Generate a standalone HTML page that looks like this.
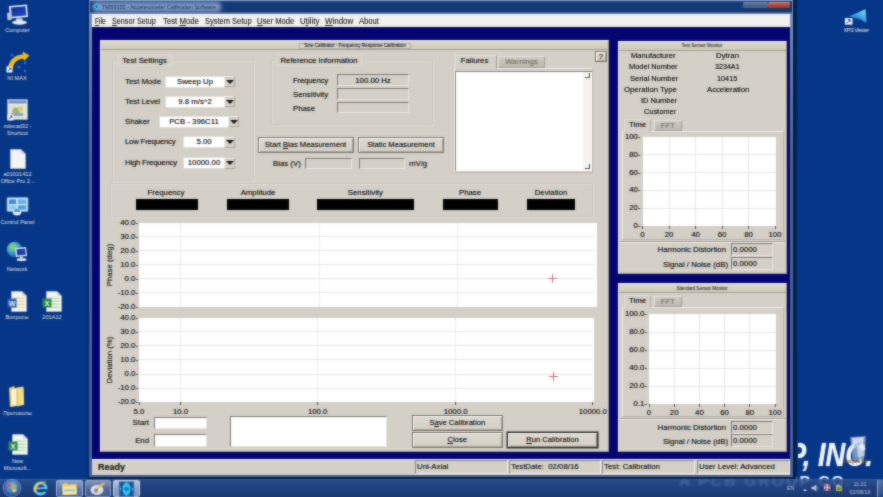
<!DOCTYPE html>
<html>
<head>
<meta charset="utf-8">
<title>TMS9155</title>
<style>
html,body{margin:0;padding:0;}
.layer{position:absolute;left:-10px;top:-10px;width:903px;height:517px;overflow:hidden;background:#063687;text-shadow:0 0 0.6px rgba(0,0,0,0.5);}
.inner{position:absolute;left:10px;top:10px;width:883px;height:497px;}
body{width:883px;height:497px;overflow:hidden;position:relative;background:#063687;font-family:"Liberation Sans",sans-serif;font-size:7.8px;color:#161616;}
.a{position:absolute;}
.t{position:absolute;white-space:nowrap;line-height:10px;height:10px;color:#161616;font-size:7.8px;}
.r{text-align:right;}
.c{text-align:center;}
.g{color:#8a867e;}
.beige{background:#d4d0c8;}
.sunk{position:absolute;box-sizing:border-box;border-top:1px solid #807c73;border-left:1px solid #807c73;border-right:1px solid #e9e6e0;border-bottom:1px solid #e9e6e0;background:#d4d0c8;}
.btn{position:absolute;box-sizing:border-box;border:1px solid #7d796f;box-shadow:inset 1px 1px 0 #f6f5f1, inset -1px -1px 0 #a9a59b;background:linear-gradient(#dedad3,#d2cec5);text-align:center;font-size:7.6px;line-height:13.5px;color:#161616;white-space:nowrap;}
.grp{position:absolute;box-sizing:border-box;border:1px solid #cbc7be;box-shadow:inset 1px 1px 0 #dedbd4, 1px 1px 0 #dedbd4;}
.gl{position:absolute;background:#d4d0c8;border:1px solid #dcd9d2;box-sizing:border-box;text-align:center;line-height:9px;height:11px;font-size:7.8px;color:#161616;white-space:nowrap;}
.dd{position:absolute;box-sizing:border-box;background:#fff;text-align:center;line-height:10px;font-size:7.8px;color:#161616;white-space:nowrap;box-shadow:0 0 0 1px #e2dfd8;}
.ddb{position:absolute;box-sizing:border-box;width:11px;height:11px;background:#d6d2ca;border:1px solid #aca89e;border-top-color:#efede8;border-left-color:#efede8;}
.ddb:after{content:"";position:absolute;left:0.5px;top:2.5px;border-left:4px solid transparent;border-right:4px solid transparent;border-top:4px solid #141414;}
.blk{position:absolute;background:#000;}
.lbl{position:absolute;color:#e8eefa;font-size:5.6px;line-height:6.5px;text-align:center;white-space:nowrap;width:44px;}
.h{position:absolute;height:1px;background:#e8e8e8;}
.v{position:absolute;width:1px;background:#e8e8e8;}
.pane{position:absolute;box-sizing:border-box;top:460px;height:14px;border:1px solid #8d897f;border-right-color:#f4f2ee;border-bottom-color:#f4f2ee;font-size:7.8px;line-height:12px;padding-left:1px;white-space:nowrap;color:#161616;}
.tab{position:absolute;box-sizing:border-box;font-size:7.8px;text-align:center;white-space:nowrap;}
</style>
</head>
<body>

<div class="layer"><div class="inner">
<div class="a" id="inc" style="left:787.5px;top:437px;font:italic bold 33px 'Liberation Sans',sans-serif;color:#f2f5fb;white-space:nowrap;line-height:36px;transform-origin:0 0;transform:scaleX(0.83);text-shadow:0 0 1px #f2f5fb;">P, INC.</div>
<div class="a" id="pcb" style="left:679px;top:472.5px;font:bold 15.5px 'Liberation Sans',sans-serif;color:#e8eefa;letter-spacing:2.2px;white-space:nowrap;line-height:16px;text-shadow:none;clip-path:inset(0 0 0 115px);">A PCB GROUP CO.</div>
<div class="a" style="left:86px;top:-6px;width:3px;height:483px;background:linear-gradient(90deg,#063687,#04286a);"></div>
<div class="a" style="left:88.5px;top:-6px;width:704.5px;height:483px;background:linear-gradient(#7d96be,#6a84b2 12%,#4a6496 35%,#48629a);"></div>
<div class="a" style="left:793px;top:-6px;width:5px;height:483px;background:linear-gradient(90deg,#041c40,#04204c 50%,#063687);"></div>
<div class="a" style="left:90px;top:-6px;width:702px;height:19.7px;background:linear-gradient(#7a94c4 0,#7a94c4 6.8px,#1c3c74 7.6px,#123c7c 9.5px,#103a78 15.5px,#1a3668 17.5px,#6f7f9c 19.5px);"></div>
<div class="a" style="left:93px;top:1.5px;width:128px;height:10.5px;background:#9db4d8;opacity:0.8;filter:blur(2.2px);border-radius:4px;"></div>
<div class="t" style="left:102.0px;top:1.6px;font-size:6px;transform-origin:0 50%;transform:scaleX(0.909);color:#14284e;text-shadow:none;">TMS9155 - Accelerometer Calibration Software</div>
<svg class="a" style="left:92.5px;top:3px" width="7" height="7" viewBox="0 0 7 7"><polygon points="3.5,0 7,3.5 3.5,7 0,3.5" fill="#35c3e8"/><polygon points="3.5,1.8 5.2,3.5 3.5,5.2 1.8,3.5" fill="#1a6fc0"/></svg>
<div class="a" style="left:768px;top:2px;width:22px;height:5.5px;background:linear-gradient(#d88a80,#b8453c 45%,#a8382f);border-radius:1.5px;"></div>
<div class="a" style="left:743px;top:2px;width:24.5px;height:5.5px;background:linear-gradient(#7388ac,#4f6790 45%,#486089);border-radius:1.5px;"></div>
<div class="a" style="left:88px;top:477px;width:708px;height:2px;background:#04204c;"></div>
<div class="a" style="left:92px;top:26px;width:698px;height:433.5px;background:#050571;"></div>
<div class="a" style="left:92px;top:13.6px;width:698px;height:13.9px;background:linear-gradient(#eaeef6,#f1f1f1 30%,#f3f1ec 80%,#ecebf4);"></div>
<div class="t" style="left:95.0px;top:15.6px;font-size:9.2px;transform-origin:0 50%;transform:scaleX(0.729);color:#2e2e2e;"><u>F</u>ile</div>
<div class="t" style="left:112.2px;top:15.6px;font-size:9.2px;transform-origin:0 50%;transform:scaleX(0.786);color:#2e2e2e;"><u>S</u>ensor Setup</div>
<div class="t" style="left:162.9px;top:15.6px;font-size:9.2px;transform-origin:0 50%;transform:scaleX(0.846);color:#2e2e2e;">Test <u>M</u>ode</div>
<div class="t" style="left:204.6px;top:15.6px;font-size:9.2px;transform-origin:0 50%;transform:scaleX(0.814);color:#2e2e2e;">S<u>y</u>stem Setup</div>
<div class="t" style="left:256.7px;top:15.6px;font-size:9.2px;transform-origin:0 50%;transform:scaleX(0.829);color:#2e2e2e;"><u>U</u>ser Mode</div>
<div class="t" style="left:299.8px;top:15.6px;font-size:9.2px;transform-origin:0 50%;transform:scaleX(0.867);color:#2e2e2e;">U<u>t</u>ility</div>
<div class="t" style="left:324.7px;top:15.6px;font-size:9.2px;transform-origin:0 50%;transform:scaleX(0.865);color:#2e2e2e;"><u>W</u>indow</div>
<div class="t" style="left:359.0px;top:15.6px;font-size:9.2px;transform-origin:0 50%;transform:scaleX(0.832);color:#2e2e2e;">About</div>
<div class="a beige" style="left:92px;top:459px;width:698px;height:16px;border-top:1px solid #f4f2ee;box-sizing:border-box;"></div>
<div class="t" style="left:98px;top:462px;font-size:9px;font-weight:bold;color:#1a1a1a;">Ready</div>
<div class="pane" style="left:415px;width:93px;">Uni-Axial</div>
<div class="pane" style="left:509px;width:92px;">TestDate:&nbsp; 02/08/16</div>
<div class="pane" style="left:602px;width:93px;">Test: Calibration</div>
<div class="pane" style="left:697px;width:93px;">User Level: Advanced</div>
<div class="a beige" style="left:100px;top:40px;width:509.3px;height:412px;box-sizing:border-box;border-left:1px solid #f1efea;border-top:1px solid #f1efea;border-right:1px solid #9a968c;border-bottom:1px solid #9a968c;"></div>
<div class="a" style="left:101px;top:41px;width:507.3px;height:8px;background:linear-gradient(#dedac9,#cfcab9);border-bottom:1px solid #a5a197;"></div>
<div class="a" style="left:299px;top:42.5px;width:112px;height:6px;background:#d8d4cc;border:0.5px solid #b0aca2;box-sizing:border-box;"></div>
<div class="t c" style="left:299px;top:42.5px;width:112px;font-size:4.6px;line-height:6px;height:6px;color:#222;">Sine Calibrator - Frequency Response Calibration</div>
<div class="grp" style="left:112px;top:60px;width:142px;height:121px;"></div>
<div class="gl" style="left:118px;top:55px;width:55px;text-indent:-2px;">Test Settings</div>
<div class="t" style="left:125px;top:76.7px">Test Mode</div>
<div class="dd" style="left:166px;top:76.7px;width:58px;height:10px;">Sweep Up</div>
<div class="ddb" style="left:224px;top:76.2px;"></div>
<div class="t" style="left:125px;top:96.7px">Test Level</div>
<div class="dd" style="left:166px;top:96.7px;width:58px;height:10px;">9.8 m/s^2</div>
<div class="ddb" style="left:224px;top:96.2px;"></div>
<div class="t" style="left:125px;top:116.6px">Shaker</div>
<div class="dd" style="left:160px;top:116.6px;width:68px;height:10px;">PCB - 396C11</div>
<div class="ddb" style="left:228px;top:116.1px;"></div>
<div class="t" style="left:125px;top:137.0px;letter-spacing:-0.22px">Low Frequency</div>
<div class="dd" style="left:184px;top:137.0px;width:40px;height:10px;">5.00</div>
<div class="ddb" style="left:224px;top:136.5px;"></div>
<div class="t" style="left:125px;top:158.0px;letter-spacing:-0.22px">High Frequency</div>
<div class="dd" style="left:184px;top:158.0px;width:40px;height:10px;">10000.00</div>
<div class="ddb" style="left:224px;top:157.5px;"></div>
<div class="grp" style="left:271px;top:60px;width:162px;height:65px;"></div>
<div class="gl" style="left:276px;top:55px;width:86px;">Reference Information</div>
<div class="t" style="left:293px;top:75.8px;letter-spacing:-0.22px">Frequency</div>
<div class="sunk c" style="left:337px;top:73.6px;width:72px;height:12.4px;font-size:7.8px;line-height:12.0px;color:#161616;">100.00 Hz</div>
<div class="t" style="left:293px;top:90.3px">Sensitivity</div>
<div class="sunk c" style="left:337px;top:87.8px;width:72px;height:12.0px;font-size:7.8px;line-height:11.6px;color:#161616;"></div>
<div class="t" style="left:293px;top:104.0px">Phase</div>
<div class="sunk c" style="left:337px;top:101.7px;width:72px;height:11.8px;font-size:7.8px;line-height:11.4px;color:#161616;"></div>
<div class="btn" style="left:257.5px;top:137px;width:96px;height:15.5px;">Start <u>B</u>ias Measurement</div>
<div class="btn" style="left:358px;top:137px;width:86px;height:15.5px;">Static Measurement</div>
<div class="t" style="left:273px;top:158.6px;">Bias (V)</div>
<div class="sunk" style="left:305px;top:158px;width:47px;height:11px;"></div>
<div class="sunk" style="left:358.5px;top:158px;width:46px;height:11px;"></div>
<div class="t" style="left:409px;top:158.6px;">mV/g</div>
<div class="a" style="left:454px;top:68px;width:139px;height:105px;box-sizing:border-box;border:1px solid #b9b5ab;border-top-color:#efede8;border-left-color:#efede8;background:#d4d0c8;"></div>
<div class="tab" style="left:455px;top:54.5px;width:42px;height:14px;line-height:10.5px;background:#d4d0c8;border:1px solid #e6e3dc;border-right-color:#a9a59b;border-bottom:none;color:#161616;text-indent:-3px;">Failures</div>
<div class="tab" style="left:498px;top:56px;width:47px;height:11.5px;line-height:9px;background:linear-gradient(#d0ccc3,#bdb9af);border:1px solid #a5a197;border-top-color:#e4e1da;border-left-color:#e4e1da;color:#8a867e;">Warnings</div>
<div class="a" style="left:455px;top:70.6px;width:137px;height:100.5px;background:#fff;box-sizing:border-box;border-top:1px solid #8d897f;border-left:1px solid #8d897f;"></div>
<div class="a" style="left:583px;top:72px;width:8px;height:98px;background:#f4f3f0;"></div>
<div class="a" style="left:585px;top:73px;width:5px;height:5px;border-right:1px solid #55524c;border-bottom:1px solid #55524c;box-sizing:border-box;"></div>
<div class="a" style="left:585px;top:164px;width:5px;height:5px;border-right:1px solid #55524c;border-bottom:1px solid #55524c;box-sizing:border-box;"></div>
<div class="btn" style="left:595px;top:50.5px;width:12px;height:11.5px;line-height:9.5px;font-weight:bold;color:#8b5a3c;font-size:8px;">?</div>
<div class="grp" style="left:110px;top:183px;width:483px;height:34px;"></div>
<div class="t c" style="left:126.0px;width:80px;top:187.5px;">Frequency</div>
<div class="blk" style="left:135.6px;top:199.3px;width:62.1px;height:11px;"></div>
<div class="t c" style="left:218.0px;width:80px;top:187.5px;">Amplitude</div>
<div class="blk" style="left:226.7px;top:199.3px;width:62.1px;height:11px;"></div>
<div class="t c" style="left:325.4px;width:80px;top:187.5px;">Sensitivity</div>
<div class="blk" style="left:317.3px;top:199.3px;width:96.7px;height:11px;"></div>
<div class="t c" style="left:430.0px;width:80px;top:187.5px;">Phase</div>
<div class="blk" style="left:443.0px;top:199.3px;width:55.0px;height:11px;"></div>
<div class="t c" style="left:511.0px;width:80px;top:187.5px;">Deviation</div>
<div class="blk" style="left:526.7px;top:199.3px;width:47.9px;height:11px;"></div>
<div class="a" style="left:139px;top:222.5px;width:458px;height:84.0px;background:#fff;"></div>
<div class="t r" style="left:100px;width:38px;top:217.5px;">40.0-</div>
<div class="h" style="left:139px;top:236.0px;width:456px;"></div>
<div class="t r" style="left:100px;width:38px;top:231.5px;">30.0-</div>
<div class="h" style="left:139px;top:250.0px;width:456px;"></div>
<div class="t r" style="left:100px;width:38px;top:245.5px;">20.0-</div>
<div class="h" style="left:139px;top:264.0px;width:456px;"></div>
<div class="t r" style="left:100px;width:38px;top:259.5px;">10.0-</div>
<div class="h" style="left:139px;top:278.0px;width:456px;"></div>
<div class="t r" style="left:100px;width:38px;top:273.5px;">0.0-</div>
<div class="h" style="left:139px;top:292.0px;width:456px;"></div>
<div class="t r" style="left:100px;width:38px;top:287.5px;">-10.0-</div>
<div class="t r" style="left:100px;width:38px;top:301.5px;">-20.0-</div>
<div class="v" style="left:180.2px;top:222.5px;height:84.0px;background:#ececec;"></div>
<div class="v" style="left:318.6px;top:222.5px;height:84.0px;background:#ececec;"></div>
<div class="v" style="left:457.0px;top:222.5px;height:84.0px;background:#ececec;"></div>
<div class="t c" style="left:70px;width:80px;top:259.5px;transform:rotate(-90deg);">Phase (deg)</div>
<div class="a" style="left:139px;top:317.5px;width:454.6px;height:84.80000000000001px;background:#fff;"></div>
<div class="t r" style="left:100px;width:38px;top:312.5px;">40.0-</div>
<div class="h" style="left:139px;top:331.1px;width:452.6px;"></div>
<div class="t r" style="left:100px;width:38px;top:326.6px;">30.0-</div>
<div class="h" style="left:139px;top:345.3px;width:452.6px;"></div>
<div class="t r" style="left:100px;width:38px;top:340.8px;">20.0-</div>
<div class="h" style="left:139px;top:359.4px;width:452.6px;"></div>
<div class="t r" style="left:100px;width:38px;top:354.9px;">10.0-</div>
<div class="h" style="left:139px;top:373.5px;width:452.6px;"></div>
<div class="t r" style="left:100px;width:38px;top:369.0px;">0.0-</div>
<div class="h" style="left:139px;top:387.7px;width:452.6px;"></div>
<div class="t r" style="left:100px;width:38px;top:383.2px;">-10.0-</div>
<div class="t r" style="left:100px;width:38px;top:397.3px;">-20.0-</div>
<div class="v" style="left:179.9px;top:317.5px;height:84.80000000000001px;background:#ececec;"></div>
<div class="v" style="left:317.3px;top:317.5px;height:84.80000000000001px;background:#ececec;"></div>
<div class="v" style="left:454.7px;top:317.5px;height:84.80000000000001px;background:#ececec;"></div>
<div class="t c" style="left:70px;width:80px;top:354.9px;transform:rotate(-90deg);">Deviation (%)</div>
<div class="a" style="left:548.1px;top:277.7px;width:9px;height:1px;background:#c4707f;"></div>
<div class="a" style="left:552.1px;top:273.7px;width:1px;height:9px;background:#c4707f;"></div>
<div class="a" style="left:549.1px;top:375.7px;width:9px;height:1px;background:#c4707f;"></div>
<div class="a" style="left:553.1px;top:371.7px;width:1px;height:9px;background:#c4707f;"></div>
<div class="t c" style="left:108.8px;width:60px;top:406.8px;">5.0</div>
<div class="t c" style="left:150.5px;width:60px;top:406.8px;">10.0</div>
<div class="t c" style="left:287.7px;width:60px;top:406.8px;">100.0</div>
<div class="t c" style="left:425.6px;width:60px;top:406.8px;">1000.0</div>
<div class="t c" style="left:562.8px;width:60px;top:406.8px;">10000.0</div>
<div class="a" style="left:138.5px;top:402px;width:1px;height:3px;background:#55524c;"></div>
<div class="a" style="left:180.0px;top:402px;width:1px;height:3px;background:#55524c;"></div>
<div class="a" style="left:317.2px;top:402px;width:1px;height:3px;background:#55524c;"></div>
<div class="a" style="left:454.8px;top:402px;width:1px;height:3px;background:#55524c;"></div>
<div class="a" style="left:592.0px;top:402px;width:1px;height:3px;background:#55524c;"></div>
<div class="t r" style="left:109px;width:40px;top:418px;">Start</div>
<div class="t r" style="left:109px;width:40px;top:435.5px;">End</div>
<div class="sunk" style="left:154px;top:416.5px;width:53px;height:12.5px;background:#fff;"></div>
<div class="sunk" style="left:154px;top:434px;width:53px;height:12.5px;background:#fff;"></div>
<div class="sunk" style="left:230px;top:416.4px;width:156.5px;height:31px;background:#fff;"></div>
<div class="btn" style="left:412px;top:414.5px;width:90.5px;height:16px;line-height:14px;">S<u>a</u>ve Calibration</div>
<div class="btn" style="left:412px;top:432px;width:90.5px;height:16px;line-height:14px;"><u>C</u>lose</div>
<div class="btn" style="left:507px;top:432px;width:91px;height:16px;line-height:14px;border-color:#2e2c28;box-shadow:inset 1px 1px 0 #f6f5f1, inset -1px -1px 0 #8d897f, 0 0 0 0.5px #2e2c28;"><u>R</u>un Calibration</div>
<div class="a beige" style="left:617.5px;top:40.5px;width:169px;height:233.0px;box-sizing:border-box;border-left:1px solid #f1efea;border-top:1px solid #f1efea;border-right:1px solid #9a968c;border-bottom:1px solid #9a968c;"></div>
<div class="a" style="left:618.5px;top:41.5px;width:167px;height:8px;background:linear-gradient(#dedac9,#cfcab9);border-bottom:1px solid #a5a197;"></div>
<div class="t c" style="left:642px;top:43.0px;width:120px;font-size:4.6px;line-height:6px;height:6px;color:#444;">Test Sensor Monitor</div>
<div class="a beige" style="left:617.5px;top:283px;width:169px;height:169px;box-sizing:border-box;border-left:1px solid #f1efea;border-top:1px solid #f1efea;border-right:1px solid #9a968c;border-bottom:1px solid #9a968c;"></div>
<div class="a" style="left:618.5px;top:284px;width:167px;height:8px;background:linear-gradient(#dedac9,#cfcab9);border-bottom:1px solid #a5a197;"></div>
<div class="t c" style="left:642px;top:285.5px;width:120px;font-size:4.6px;line-height:6px;height:6px;color:#444;">Standard Sensor Monitor</div>
<div class="t" style="left:630.8px;top:51.3px;font-size:7.8px;transform-origin:0 50%;transform:scaleX(0.970);">Manufacturer</div>
<div class="t" style="left:716.0px;top:51.3px;font-size:7.8px;transform-origin:0 50%;transform:scaleX(1.001);">Dytran</div>
<div class="t" style="left:628.7px;top:62.4px;font-size:7.8px;transform-origin:0 50%;transform:scaleX(0.950);">Model Number</div>
<div class="t" style="left:715.0px;top:62.4px;font-size:7.8px;transform-origin:0 50%;transform:scaleX(0.915);">3234A1</div>
<div class="t" style="left:630.4px;top:73.9px;font-size:7.8px;transform-origin:0 50%;transform:scaleX(0.965);">Serial Number</div>
<div class="t" style="left:717.2px;top:73.9px;font-size:7.8px;transform-origin:0 50%;transform:scaleX(0.936);">10415</div>
<div class="t" style="left:623.5px;top:85.0px;font-size:7.8px;transform-origin:0 50%;transform:scaleX(0.994);">Operation Type</div>
<div class="t" style="left:706.6px;top:85.0px;font-size:7.8px;transform-origin:0 50%;transform:scaleX(0.988);">Acceleration</div>
<div class="t" style="left:641.3px;top:95.9px;font-size:7.8px;transform-origin:0 50%;transform:scaleX(0.955);">ID Number</div>
<div class="t" style="left:643.8px;top:107.4px;font-size:7.8px;transform-origin:0 50%;transform:scaleX(0.946);">Customer</div>
<div class="a" style="left:622px;top:131.0px;width:162px;height:108.5px;box-sizing:border-box;border:1px solid #b9b5ab;border-top-color:#efede8;border-left-color:#efede8;"></div>
<div class="tab" style="left:624px;top:118.5px;width:27px;height:13.5px;line-height:10.5px;background:#d4d0c8;border:1px solid #dfdcd5;border-right-color:#b5b1a7;border-bottom:none;color:#161616;">Time</div>
<div class="tab" style="left:654px;top:119.5px;width:28px;height:11.5px;line-height:9.5px;background:linear-gradient(#d0ccc3,#bdb9af);border:1px solid #a5a197;border-top-color:#e4e1da;border-left-color:#e4e1da;color:#8a867e;">FFT</div>
<div class="a" style="left:642.5px;top:137px;width:133.5px;height:89px;background:#fff;"></div>
<div class="t r" style="left:600.5px;width:40px;top:132.0px;">100-</div>
<div class="h" style="left:642.5px;top:154.3px;width:133.5px;"></div>
<div class="t r" style="left:600.5px;width:40px;top:149.8px;">80-</div>
<div class="h" style="left:642.5px;top:172.1px;width:133.5px;"></div>
<div class="t r" style="left:600.5px;width:40px;top:167.6px;">60-</div>
<div class="h" style="left:642.5px;top:189.9px;width:133.5px;"></div>
<div class="t r" style="left:600.5px;width:40px;top:185.4px;">40-</div>
<div class="h" style="left:642.5px;top:207.7px;width:133.5px;"></div>
<div class="t r" style="left:600.5px;width:40px;top:203.2px;">20-</div>
<div class="t r" style="left:600.5px;width:40px;top:221.0px;">0-</div>
<div class="t c" style="left:622.5px;width:40px;top:230.0px;">0</div>
<div class="a" style="left:642.0px;top:226px;width:1px;height:2.5px;background:#55524c;"></div>
<div class="v" style="left:668.5px;top:137px;height:89px;"></div>
<div class="t c" style="left:649.0px;width:40px;top:230.0px;">20</div>
<div class="a" style="left:668.5px;top:226px;width:1px;height:2.5px;background:#55524c;"></div>
<div class="v" style="left:695.0px;top:137px;height:89px;"></div>
<div class="t c" style="left:675.5px;width:40px;top:230.0px;">40</div>
<div class="a" style="left:695.0px;top:226px;width:1px;height:2.5px;background:#55524c;"></div>
<div class="v" style="left:721.5px;top:137px;height:89px;"></div>
<div class="t c" style="left:702.0px;width:40px;top:230.0px;">60</div>
<div class="a" style="left:721.5px;top:226px;width:1px;height:2.5px;background:#55524c;"></div>
<div class="v" style="left:748.0px;top:137px;height:89px;"></div>
<div class="t c" style="left:728.5px;width:40px;top:230.0px;">80</div>
<div class="a" style="left:748.0px;top:226px;width:1px;height:2.5px;background:#55524c;"></div>
<div class="t c" style="left:755.0px;width:40px;top:230.0px;">100</div>
<div class="a" style="left:774.5px;top:226px;width:1px;height:2.5px;background:#55524c;"></div>
<div class="a" style="left:620px;top:241px;width:165px;height:1px;background:#a5a197;border-bottom:1px solid #efede8;"></div>
<div class="t r" style="left:626px;width:100px;top:245.3px;">Harmonic Distortion</div>
<div class="sunk" style="left:731px;top:242.8px;width:42px;height:13px;font-size:7.8px;line-height:11px;padding-left:1px;color:#161616;">0.0000</div>
<div class="t r" style="left:628px;width:100px;top:259.6px;">Signal / Noise (dB)</div>
<div class="sunk" style="left:731px;top:257.1px;width:42px;height:13px;font-size:7.8px;line-height:11px;padding-left:1px;color:#161616;">0.0000</div>
<div class="a" style="left:622px;top:307.0px;width:162px;height:109.5px;box-sizing:border-box;border:1px solid #b9b5ab;border-top-color:#efede8;border-left-color:#efede8;"></div>
<div class="tab" style="left:624px;top:294.5px;width:27px;height:13.5px;line-height:10.5px;background:#d4d0c8;border:1px solid #dfdcd5;border-right-color:#b5b1a7;border-bottom:none;color:#161616;">Time</div>
<div class="tab" style="left:654px;top:295.5px;width:28px;height:11.5px;line-height:9.5px;background:linear-gradient(#d0ccc3,#bdb9af);border:1px solid #a5a197;border-top-color:#e4e1da;border-left-color:#e4e1da;color:#8a867e;">FFT</div>
<div class="a" style="left:649px;top:314px;width:127px;height:90px;background:#fff;"></div>
<div class="t r" style="left:607px;width:40px;top:309.0px;">100.0-</div>
<div class="h" style="left:649px;top:331.5px;width:127px;"></div>
<div class="t r" style="left:607px;width:40px;top:327.0px;">80.0-</div>
<div class="h" style="left:649px;top:349.5px;width:127px;"></div>
<div class="t r" style="left:607px;width:40px;top:345.0px;">60.0-</div>
<div class="h" style="left:649px;top:367.5px;width:127px;"></div>
<div class="t r" style="left:607px;width:40px;top:363.0px;">40.0-</div>
<div class="h" style="left:649px;top:385.5px;width:127px;"></div>
<div class="t r" style="left:607px;width:40px;top:381.0px;">20.0-</div>
<div class="t r" style="left:607px;width:40px;top:399.0px;">0.1-</div>
<div class="t c" style="left:629.0px;width:40px;top:408.0px;">0</div>
<div class="a" style="left:648.5px;top:404px;width:1px;height:2.5px;background:#55524c;"></div>
<div class="v" style="left:673.7px;top:314px;height:90px;"></div>
<div class="t c" style="left:654.2px;width:40px;top:408.0px;">20</div>
<div class="a" style="left:673.7px;top:404px;width:1px;height:2.5px;background:#55524c;"></div>
<div class="v" style="left:698.9px;top:314px;height:90px;"></div>
<div class="t c" style="left:679.4px;width:40px;top:408.0px;">40</div>
<div class="a" style="left:698.9px;top:404px;width:1px;height:2.5px;background:#55524c;"></div>
<div class="v" style="left:724.1px;top:314px;height:90px;"></div>
<div class="t c" style="left:704.6px;width:40px;top:408.0px;">60</div>
<div class="a" style="left:724.1px;top:404px;width:1px;height:2.5px;background:#55524c;"></div>
<div class="v" style="left:749.3px;top:314px;height:90px;"></div>
<div class="t c" style="left:729.8px;width:40px;top:408.0px;">80</div>
<div class="a" style="left:749.3px;top:404px;width:1px;height:2.5px;background:#55524c;"></div>
<div class="t c" style="left:755.0px;width:40px;top:408.0px;">100</div>
<div class="a" style="left:774.5px;top:404px;width:1px;height:2.5px;background:#55524c;"></div>
<div class="a" style="left:620px;top:418px;width:165px;height:1px;background:#a5a197;border-bottom:1px solid #efede8;"></div>
<div class="t r" style="left:626px;width:100px;top:423.0px;">Harmonic Distortion</div>
<div class="sunk" style="left:731px;top:420.5px;width:42px;height:13px;font-size:7.8px;line-height:11px;padding-left:1px;color:#161616;">0.0000</div>
<div class="t r" style="left:628px;width:100px;top:436.6px;">Signal / Noise (dB)</div>
<div class="sunk" style="left:731px;top:434.1px;width:42px;height:13px;font-size:7.8px;line-height:11px;padding-left:1px;color:#161616;">0.0000</div>
<svg class="a" style="left:6px;top:4px" width="24" height="22" viewBox="0 0 24 22">
<defs><linearGradient id="scr" x1="0" y1="0" x2="1" y2="1"><stop offset="0" stop-color="#0f2a96"/><stop offset="1" stop-color="#1f4fc4"/></linearGradient></defs>
<polygon points="3,2 21,0.5 22,13 4,14.5" fill="#dfe6f3"/>
<polygon points="5,3.5 19.5,2.3 20.3,11.6 5.8,12.8" fill="url(#scr)"/>
<polygon points="10,14.5 16,14 17,17 10,17.5" fill="#c2cad9"/>
<ellipse cx="13.5" cy="18.5" rx="7.5" ry="2.2" fill="#e6ebf5"/>
<polygon points="1,9 5,8.6 5.5,16 1.5,16.3" fill="#b9c3d6"/>
</svg>
<div class="lbl" style="left:-4.5px;top:26.8px;width:44px;">Computer</div>
<svg class="a" style="left:6px;top:51px" width="24" height="24" viewBox="0 0 24 24">
<circle cx="6" cy="4" r="1.5" fill="#2d67c9"/><circle cx="13" cy="16" r="1.6" fill="#2d67c9"/><circle cx="19" cy="12" r="1.4" fill="#2d67c9"/><circle cx="19" cy="20" r="1.4" fill="#2d67c9"/>
<path d="M1.5,18.5 C2.5,9 9,3.5 17,3.5 L16.5,0.5 L23.5,4.5 L18,10 L17.5,7.8 C11.5,8 7.5,11.5 6.5,18.5 Z" fill="#f0bb1c"/>
<rect x="0.5" y="15.5" width="6" height="6" fill="#f4f6fb"/><path d="M2,20 L5,17 M5,17 L3,17 M5,17 L5,19" stroke="#1b3fae" stroke-width="0.9" fill="none"/>
</svg>
<div class="lbl" style="left:-5.0px;top:74.8px;width:44px;">NI MAX</div>
<svg class="a" style="left:7px;top:99px" width="21" height="22" viewBox="0 0 21 22">
<rect x="0.5" y="0.5" width="20" height="20" fill="#e9ebe6" stroke="#9aa6b8" stroke-width="0.8"/>
<rect x="1.5" y="1.5" width="18" height="3" fill="#6f8fc6"/>
<rect x="2" y="6" width="17" height="13" fill="#dfe3cf"/>
<circle cx="9" cy="12" r="3.5" fill="#9db37a"/><circle cx="13.5" cy="10" r="2.5" fill="#e6c96a"/><rect x="4" y="14" width="12" height="3" fill="#8aa2c9"/>
<rect x="0.5" y="15.5" width="6" height="6" fill="#f4f6fb"/><path d="M2,20 L5,17 M5,17 L3,17 M5,17 L5,19" stroke="#1b3fae" stroke-width="0.9" fill="none"/>
</svg>
<div class="lbl" style="left:-4.5px;top:123.1px;width:44px;">ndecad32 -</div>
<div class="lbl" style="left:-4.5px;top:129.8px;width:44px;">Shortcut</div>
<svg class="a" style="left:10px;top:149px" width="16" height="20" viewBox="0 0 16 20">
<path d="M0.5,0.5 L11,0.5 L15.5,5 L15.5,19.5 L0.5,19.5 Z" fill="#f3f4f6" stroke="#c9ced8" stroke-width="0.6"/>
<path d="M11,0.5 L11,5 L15.5,5 Z" fill="#d2d7e1"/>
</svg>
<div class="lbl" style="left:-4.5px;top:170.8px;width:44px;">a01021412</div>
<div class="lbl" style="left:-4.5px;top:177.6px;width:44px;">Office Pro 2...</div>
<svg class="a" style="left:6px;top:197px" width="23" height="19" viewBox="0 0 23 19">
<rect x="1" y="0.5" width="21" height="14" rx="1" fill="#bfe0f2" stroke="#6da7d4" stroke-width="0.8"/>
<rect x="3" y="2.5" width="7" height="4.5" fill="#3f8fd0"/><rect x="12" y="2.5" width="8" height="4.5" fill="#69b5e4"/>
<rect x="3" y="8.5" width="7" height="4" fill="#8cc9ea"/><rect x="12" y="8.5" width="8" height="4" fill="#4f9ed6"/>
<ellipse cx="11" cy="15.5" rx="4.2" ry="3" fill="#e8edf4"/><path d="M8,15 A3,3 0 0 1 14,15" fill="#4a8fd2"/>
</svg>
<div class="lbl" style="left:-4.5px;top:218.8px;width:44px;">Control Panel</div>
<svg class="a" style="left:6px;top:241px" width="22" height="22" viewBox="0 0 22 22">
<defs><radialGradient id="gl" cx="0.4" cy="0.35" r="0.7"><stop offset="0" stop-color="#9be07a"/><stop offset="0.5" stop-color="#3fa0c8"/><stop offset="1" stop-color="#1a56b0"/></radialGradient></defs>
<circle cx="8.5" cy="8.5" r="7.8" fill="url(#gl)"/>
<path d="M3,6 C5,3 8,3 9,5 C8,8 5,9 3,6 Z" fill="#7fd06a" opacity="0.9"/>
<polygon points="9,7 20,6 21,15 10,16" fill="#dfe6f3"/><polygon points="10.5,8.3 19,7.5 19.7,13.8 11.2,14.6" fill="#1b3fae"/>
<ellipse cx="15.5" cy="18.5" rx="5" ry="1.6" fill="#e6ebf5"/><rect x="14" y="15.5" width="3" height="3" fill="#c2cad9"/>
</svg>
<div class="lbl" style="left:-5.0px;top:265.8px;width:44px;">Network</div>
<svg class="a" style="left:7px;top:291px" width="20" height="21" viewBox="0 0 20 21">
<path d="M4.5,0.5 L15,0.5 L19.5,5 L19.5,20.5 L4.5,20.5 Z" fill="#f4f5f4" stroke="#c5cbd6" stroke-width="0.6"/>
<path d="M15,0.5 L15,5 L19.5,5 Z" fill="#d2d7e1"/>
<rect x="7" y="6.5" width="10.5" height="1.6" fill="#e9d9a6"/><rect x="7" y="9.5" width="10.5" height="1.6" fill="#e9d9a6"/><rect x="7" y="12.5" width="10.5" height="1.6" fill="#e9d9a6"/><rect x="7" y="15.5" width="10.5" height="1.6" fill="#e9d9a6"/>
<rect x="0.5" y="7.5" width="9" height="9" fill="#2b5fb8"/>
<text x="5" y="14.6" font-family="Liberation Sans" font-weight="bold" font-size="7" fill="#fff" text-anchor="middle">W</text>
</svg>
<div class="lbl" style="left:-5.0px;top:314.3px;width:44px;">Вопросы</div>
<svg class="a" style="left:41.5px;top:291px" width="20" height="21" viewBox="0 0 20 21">
<path d="M4.5,0.5 L15,0.5 L19.5,5 L19.5,20.5 L4.5,20.5 Z" fill="#f4f5f4" stroke="#c5cbd6" stroke-width="0.6"/>
<path d="M15,0.5 L15,5 L19.5,5 Z" fill="#d2d7e1"/>
<rect x="7" y="6.5" width="10.5" height="1.6" fill="#bfe0b0"/><rect x="7" y="9.5" width="10.5" height="1.6" fill="#bfe0b0"/><rect x="7" y="12.5" width="10.5" height="1.6" fill="#bfe0b0"/><rect x="7" y="15.5" width="10.5" height="1.6" fill="#bfe0b0"/>
<rect x="0.5" y="7.5" width="9" height="9" fill="#2e8b4f"/>
<text x="5" y="14.6" font-family="Liberation Sans" font-weight="bold" font-size="7" fill="#fff" text-anchor="middle">X</text>
</svg>
<div class="lbl" style="left:30.0px;top:314.3px;width:44px;">201A12</div>
<svg class="a" style="left:8px;top:385px" width="17" height="23" viewBox="0 0 17 23">
<path d="M1,3 L6,1 L7,3 L15,2 L16,20 L2,22 Z" fill="#e9c95c"/>
<path d="M3,5 L8,3.5 L8.5,20 L3.5,21.5 Z" fill="#f7f2e4"/>
<path d="M8,3 L15.5,1.5 L16.2,19.5 L9,21.5 Z" fill="#f4dc85"/>
<path d="M9.5,5 L9.5,20" stroke="#d8b64a" stroke-width="0.8"/>
</svg>
<div class="lbl" style="left:-4.5px;top:410.1px;width:44px;">Протоколы</div>
<svg class="a" style="left:8px;top:434px" width="20" height="21" viewBox="0 0 20 21">
<path d="M4.5,0.5 L15,0.5 L19.5,5 L19.5,20.5 L4.5,20.5 Z" fill="#f4f5f4" stroke="#c5cbd6" stroke-width="0.6"/>
<path d="M15,0.5 L15,5 L19.5,5 Z" fill="#d2d7e1"/>
<rect x="7" y="6.5" width="10.5" height="1.6" fill="#bfe0b0"/><rect x="7" y="9.5" width="10.5" height="1.6" fill="#bfe0b0"/><rect x="7" y="12.5" width="10.5" height="1.6" fill="#bfe0b0"/><rect x="7" y="15.5" width="10.5" height="1.6" fill="#bfe0b0"/>
<rect x="0.5" y="7.5" width="9" height="9" fill="#2e8b4f"/>
<text x="5" y="14.6" font-family="Liberation Sans" font-weight="bold" font-size="7" fill="#fff" text-anchor="middle">X</text>
</svg>
<div class="lbl" style="left:-4.5px;top:457.5px;width:44px;">New</div>
<div class="lbl" style="left:-4.5px;top:464.6px;width:44px;">Microsoft...</div>
<svg class="a" style="left:844px;top:8px" width="24" height="18" viewBox="0 0 24 18">
<defs><linearGradient id="xps" x1="1" y1="0" x2="0.2" y2="1"><stop offset="0" stop-color="#9be4fb"/><stop offset="0.5" stop-color="#3fa8e8"/><stop offset="1" stop-color="#1f6fc8"/></linearGradient></defs>
<polygon points="21.4,1.3 5.3,8.2 11,10 22.6,14.5" fill="url(#xps)"/>
<path d="M11,10 Q15,8.5 19.5,13.3 L11.5,12.5 Z" fill="#164a9e" opacity="0.8"/>
<rect x="0.9" y="10.1" width="7.6" height="6.6" fill="#eef2fa"/><path d="M2.6,15.2 L6.2,11.8 M6.2,11.8 L4,11.8 M6.2,11.8 L6.2,14" stroke="#1b3fae" stroke-width="1" fill="none"/>
</svg>
<div class="lbl" style="left:834.0px;top:27.1px;width:44px;letter-spacing:-0.45px;">XPS Viewer</div>
<svg class="a" style="left:848px;top:434px" width="20" height="30" viewBox="0 0 20 30">
<path d="M2,3 L18,2 L16,27 L5,28 Z" fill="#c8d6e8" opacity="0.55"/>
<path d="M4,4 L16,3 L15,12 L5,13 Z" fill="#eef3fa" opacity="0.75"/>
<path d="M6,10 L13,8 L11,15 L14,21 L7,23 Z" fill="#7fa6d2" opacity="0.6"/>
<path d="M9,12 L17,10 L16.5,22 L10,24 Z" fill="#f4f7fb" opacity="0.6"/>
</svg>
<div class="lbl" style="left:834px;top:459px;width:44px;color:#8a6a3a;font-size:4.5px;">Recycle Bin</div>
<div class="a" style="left:-8px;top:478.5px;width:899px;height:26px;background:linear-gradient(#2a4d8a,#1f4280 6.5px,#193870 18.5px,#193870);border-top:1px solid #3a5a94;box-sizing:border-box;"></div>
<div class="a" style="left:679px;top:472.5px;font:bold 15.5px 'Liberation Sans',sans-serif;color:#6f8fc8;opacity:0.45;letter-spacing:2.2px;white-space:nowrap;line-height:16px;text-shadow:none;filter:blur(1px);clip-path:inset(6.5px 0 0 0);">A PCB GROUP CO.</div>
<div class="a" style="left:56px;top:479.5px;width:26.5px;height:17.5px;background:linear-gradient(#8fa6cb,#5c7bb0 50%,#4a6aa2);border:1px solid #9fb4d6;box-sizing:border-box;border-radius:1.5px;"></div>
<div class="a" style="left:85px;top:479.5px;width:26px;height:17.5px;background:linear-gradient(#8597b8,#55699a 50%,#445a8e);border:1px solid #8ea2c6;box-sizing:border-box;border-radius:1.5px;"></div>
<div class="a" style="left:113px;top:479.5px;width:27px;height:17.5px;background:linear-gradient(#b7c6de,#8ba3cb 50%,#7d97c2);border:1px solid #c5d2e8;box-sizing:border-box;border-radius:1.5px;"></div>
<svg class="a" style="left:2px;top:478px" width="20" height="19" viewBox="0 0 20 19">
<defs><radialGradient id="orb" cx="0.5" cy="0.4" r="0.6"><stop offset="0" stop-color="#a6c8ee"/><stop offset="0.6" stop-color="#3f74b8"/><stop offset="1" stop-color="#1f4480"/></radialGradient></defs>
<circle cx="10" cy="10" r="8.8" fill="url(#orb)" stroke="#8fb0dc" stroke-width="0.6"/>
<path d="M5.5,6.5 Q7.5,5.3 9.3,6.3 L9.3,9.6 Q7.5,8.8 5.5,9.8 Z" fill="#e8553a"/>
<path d="M10.3,6.4 Q12.3,7.4 14.3,6.4 L14.3,9.6 Q12.3,10.5 10.3,9.6 Z" fill="#8bc34a"/>
<path d="M5.5,10.8 Q7.5,9.8 9.3,10.6 L9.3,13.8 Q7.5,13 5.5,14 Z" fill="#3b8ee0"/>
<path d="M10.3,10.6 Q12.3,11.5 14.3,10.6 L14.3,13.7 Q12.3,14.7 10.3,13.8 Z" fill="#f5c63a"/>
</svg>
<svg class="a" style="left:32px;top:480px" width="17" height="16" viewBox="0 0 17 16">
<circle cx="8.5" cy="8.5" r="5.6" fill="none" stroke="#5cc0f2" stroke-width="3"/>
<rect x="4" y="7.3" width="10" height="2" fill="#5cc0f2"/>
<rect x="9" y="9.3" width="6.5" height="2.4" fill="#17346c"/>
<path d="M2,12 C0,6 8,-1 15.5,2.5 C10,1.5 4,6 3.5,12 Z" fill="#f2c84a"/>
</svg>
<svg class="a" style="left:61px;top:482px" width="17" height="14" viewBox="0 0 17 14">
<path d="M1,2 L6,1 L7,2.5 L15.5,2 L16,12.5 L1.5,13 Z" fill="#f0d36a"/>
<path d="M2,5 L15,4.4 L15.5,12 L2.3,12.5 Z" fill="#f8eaa4"/>
<rect x="3" y="7" width="11" height="2.5" fill="#8fc0e8" opacity="0.8"/>
</svg>
<svg class="a" style="left:89px;top:481px" width="18" height="15" viewBox="0 0 18 15">
<ellipse cx="8" cy="9" rx="6.5" ry="5" fill="#d9dde6"/>
<path d="M5,11 C7,6 11,3 15,1.5 L16,3 C12,5 9,8 7.5,12 Z" fill="#e9c45a"/>
<circle cx="7" cy="9.5" r="2" fill="#7f8aa3"/>
</svg>
<svg class="a" style="left:118px;top:480.5px" width="17" height="16" viewBox="0 0 17 16">
<rect x="1" y="0.5" width="15" height="15" fill="#2a63ae"/>
<polygon points="8.5,1 15.5,8 8.5,15 1.5,8" fill="#2ccaf0"/>
<polygon points="8.5,5.2 11.3,8 8.5,10.8 5.7,8" fill="#1479c8"/>
<rect x="3.3" y="1" width="1.2" height="14" fill="#143a78"/><rect x="12.5" y="1" width="1.2" height="14" fill="#143a78"/>
</svg>
<div class="t" style="left:787px;top:482.5px;font-size:5.2px;color:#b9c6de;text-shadow:none;">EN</div>
<div class="a" style="left:803px;top:488.5px;width:0;height:0;border-left:2px solid transparent;border-right:2px solid transparent;border-bottom:2.5px solid #dfe6f3;"></div>
<svg class="a" style="left:811px;top:483.5px;opacity:0.8" width="8" height="8" viewBox="0 0 9 9"><polygon points="0.5,3 3,3 6,0.5 6,8.5 3,6 0.5,6" fill="#e9eef6"/><path d="M7,2.5 Q8.5,4.5 7,6.5" stroke="#e9eef6" stroke-width="0.7" fill="none"/></svg>
<svg class="a" style="left:823px;top:483.5px;opacity:0.75" width="8" height="8" viewBox="0 0 9 9"><rect x="1" y="0.5" width="7" height="7" fill="#f3f0f0"/><path d="M1,0.5 L8,7.5 M8,0.5 L1,7.5" stroke="#d33" stroke-width="1.6"/><circle cx="4.5" cy="4" r="1.4" fill="#fff"/></svg>
<svg class="a" style="left:834.5px;top:483.5px;opacity:0.8" width="8" height="8" viewBox="0 0 9 9"><rect x="1" y="2" width="7" height="6" fill="#d8c84a"/><rect x="2" y="0.8" width="3" height="2" fill="#efe6a0"/><rect x="2.5" y="4" width="4" height="2.5" fill="#6f8a3a"/></svg>
<div class="t c" style="left:840px;width:40px;top:479.5px;font-size:5.4px;line-height:8px;height:8px;color:#b9c6de;text-shadow:none;">11:21</div>
<div class="t c" style="left:840px;width:40px;top:488px;font-size:5.4px;line-height:8px;height:8px;color:#b9c6de;text-shadow:none;">02/08/16</div>
<div class="a" style="left:877px;top:479.5px;width:6px;height:17.5px;background:linear-gradient(#5c78aa,#2c4a84);border-left:1px solid #8aa2cc;box-sizing:border-box;"></div>
</div></div>
<div class="layer" style="filter:blur(0.8px);opacity:0.55;"><div class="inner">
<div class="a" style="left:787.5px;top:437px;font:italic bold 33px 'Liberation Sans',sans-serif;color:#f2f5fb;white-space:nowrap;line-height:36px;transform-origin:0 0;transform:scaleX(0.83);text-shadow:0 0 1px #f2f5fb;">P, INC.</div>
<div class="a" style="left:679px;top:472.5px;font:bold 15.5px 'Liberation Sans',sans-serif;color:#e8eefa;letter-spacing:2.2px;white-space:nowrap;line-height:16px;text-shadow:none;clip-path:inset(0 0 0 115px);">A PCB GROUP CO.</div>
<div class="a" style="left:86px;top:-6px;width:3px;height:483px;background:linear-gradient(90deg,#063687,#04286a);"></div>
<div class="a" style="left:88.5px;top:-6px;width:704.5px;height:483px;background:linear-gradient(#7d96be,#6a84b2 12%,#4a6496 35%,#48629a);"></div>
<div class="a" style="left:793px;top:-6px;width:5px;height:483px;background:linear-gradient(90deg,#041c40,#04204c 50%,#063687);"></div>
<div class="a" style="left:90px;top:-6px;width:702px;height:19.7px;background:linear-gradient(#7a94c4 0,#7a94c4 6.8px,#1c3c74 7.6px,#123c7c 9.5px,#103a78 15.5px,#1a3668 17.5px,#6f7f9c 19.5px);"></div>
<div class="a" style="left:93px;top:1.5px;width:128px;height:10.5px;background:#9db4d8;opacity:0.8;filter:blur(2.2px);border-radius:4px;"></div>
<div class="t" style="left:102.0px;top:1.6px;font-size:6px;transform-origin:0 50%;transform:scaleX(0.909);color:#14284e;text-shadow:none;">TMS9155 - Accelerometer Calibration Software</div>
<svg class="a" style="left:92.5px;top:3px" width="7" height="7" viewBox="0 0 7 7"><polygon points="3.5,0 7,3.5 3.5,7 0,3.5" fill="#35c3e8"/><polygon points="3.5,1.8 5.2,3.5 3.5,5.2 1.8,3.5" fill="#1a6fc0"/></svg>
<div class="a" style="left:768px;top:2px;width:22px;height:5.5px;background:linear-gradient(#d88a80,#b8453c 45%,#a8382f);border-radius:1.5px;"></div>
<div class="a" style="left:743px;top:2px;width:24.5px;height:5.5px;background:linear-gradient(#7388ac,#4f6790 45%,#486089);border-radius:1.5px;"></div>
<div class="a" style="left:88px;top:477px;width:708px;height:2px;background:#04204c;"></div>
<div class="a" style="left:92px;top:26px;width:698px;height:433.5px;background:#050571;"></div>
<div class="a" style="left:92px;top:13.6px;width:698px;height:13.9px;background:linear-gradient(#eaeef6,#f1f1f1 30%,#f3f1ec 80%,#ecebf4);"></div>
<div class="t" style="left:95.0px;top:15.6px;font-size:9.2px;transform-origin:0 50%;transform:scaleX(0.729);color:#2e2e2e;"><u>F</u>ile</div>
<div class="t" style="left:112.2px;top:15.6px;font-size:9.2px;transform-origin:0 50%;transform:scaleX(0.786);color:#2e2e2e;"><u>S</u>ensor Setup</div>
<div class="t" style="left:162.9px;top:15.6px;font-size:9.2px;transform-origin:0 50%;transform:scaleX(0.846);color:#2e2e2e;">Test <u>M</u>ode</div>
<div class="t" style="left:204.6px;top:15.6px;font-size:9.2px;transform-origin:0 50%;transform:scaleX(0.814);color:#2e2e2e;">S<u>y</u>stem Setup</div>
<div class="t" style="left:256.7px;top:15.6px;font-size:9.2px;transform-origin:0 50%;transform:scaleX(0.829);color:#2e2e2e;"><u>U</u>ser Mode</div>
<div class="t" style="left:299.8px;top:15.6px;font-size:9.2px;transform-origin:0 50%;transform:scaleX(0.867);color:#2e2e2e;">U<u>t</u>ility</div>
<div class="t" style="left:324.7px;top:15.6px;font-size:9.2px;transform-origin:0 50%;transform:scaleX(0.865);color:#2e2e2e;"><u>W</u>indow</div>
<div class="t" style="left:359.0px;top:15.6px;font-size:9.2px;transform-origin:0 50%;transform:scaleX(0.832);color:#2e2e2e;">About</div>
<div class="a beige" style="left:92px;top:459px;width:698px;height:16px;border-top:1px solid #f4f2ee;box-sizing:border-box;"></div>
<div class="t" style="left:98px;top:462px;font-size:9px;font-weight:bold;color:#1a1a1a;">Ready</div>
<div class="pane" style="left:415px;width:93px;">Uni-Axial</div>
<div class="pane" style="left:509px;width:92px;">TestDate:&nbsp; 02/08/16</div>
<div class="pane" style="left:602px;width:93px;">Test: Calibration</div>
<div class="pane" style="left:697px;width:93px;">User Level: Advanced</div>
<div class="a beige" style="left:100px;top:40px;width:509.3px;height:412px;box-sizing:border-box;border-left:1px solid #f1efea;border-top:1px solid #f1efea;border-right:1px solid #9a968c;border-bottom:1px solid #9a968c;"></div>
<div class="a" style="left:101px;top:41px;width:507.3px;height:8px;background:linear-gradient(#dedac9,#cfcab9);border-bottom:1px solid #a5a197;"></div>
<div class="a" style="left:299px;top:42.5px;width:112px;height:6px;background:#d8d4cc;border:0.5px solid #b0aca2;box-sizing:border-box;"></div>
<div class="t c" style="left:299px;top:42.5px;width:112px;font-size:4.6px;line-height:6px;height:6px;color:#222;">Sine Calibrator - Frequency Response Calibration</div>
<div class="grp" style="left:112px;top:60px;width:142px;height:121px;"></div>
<div class="gl" style="left:118px;top:55px;width:55px;text-indent:-2px;">Test Settings</div>
<div class="t" style="left:125px;top:76.7px">Test Mode</div>
<div class="dd" style="left:166px;top:76.7px;width:58px;height:10px;">Sweep Up</div>
<div class="ddb" style="left:224px;top:76.2px;"></div>
<div class="t" style="left:125px;top:96.7px">Test Level</div>
<div class="dd" style="left:166px;top:96.7px;width:58px;height:10px;">9.8 m/s^2</div>
<div class="ddb" style="left:224px;top:96.2px;"></div>
<div class="t" style="left:125px;top:116.6px">Shaker</div>
<div class="dd" style="left:160px;top:116.6px;width:68px;height:10px;">PCB - 396C11</div>
<div class="ddb" style="left:228px;top:116.1px;"></div>
<div class="t" style="left:125px;top:137.0px;letter-spacing:-0.22px">Low Frequency</div>
<div class="dd" style="left:184px;top:137.0px;width:40px;height:10px;">5.00</div>
<div class="ddb" style="left:224px;top:136.5px;"></div>
<div class="t" style="left:125px;top:158.0px;letter-spacing:-0.22px">High Frequency</div>
<div class="dd" style="left:184px;top:158.0px;width:40px;height:10px;">10000.00</div>
<div class="ddb" style="left:224px;top:157.5px;"></div>
<div class="grp" style="left:271px;top:60px;width:162px;height:65px;"></div>
<div class="gl" style="left:276px;top:55px;width:86px;">Reference Information</div>
<div class="t" style="left:293px;top:75.8px;letter-spacing:-0.22px">Frequency</div>
<div class="sunk c" style="left:337px;top:73.6px;width:72px;height:12.4px;font-size:7.8px;line-height:12.0px;color:#161616;">100.00 Hz</div>
<div class="t" style="left:293px;top:90.3px">Sensitivity</div>
<div class="sunk c" style="left:337px;top:87.8px;width:72px;height:12.0px;font-size:7.8px;line-height:11.6px;color:#161616;"></div>
<div class="t" style="left:293px;top:104.0px">Phase</div>
<div class="sunk c" style="left:337px;top:101.7px;width:72px;height:11.8px;font-size:7.8px;line-height:11.4px;color:#161616;"></div>
<div class="btn" style="left:257.5px;top:137px;width:96px;height:15.5px;">Start <u>B</u>ias Measurement</div>
<div class="btn" style="left:358px;top:137px;width:86px;height:15.5px;">Static Measurement</div>
<div class="t" style="left:273px;top:158.6px;">Bias (V)</div>
<div class="sunk" style="left:305px;top:158px;width:47px;height:11px;"></div>
<div class="sunk" style="left:358.5px;top:158px;width:46px;height:11px;"></div>
<div class="t" style="left:409px;top:158.6px;">mV/g</div>
<div class="a" style="left:454px;top:68px;width:139px;height:105px;box-sizing:border-box;border:1px solid #b9b5ab;border-top-color:#efede8;border-left-color:#efede8;background:#d4d0c8;"></div>
<div class="tab" style="left:455px;top:54.5px;width:42px;height:14px;line-height:10.5px;background:#d4d0c8;border:1px solid #e6e3dc;border-right-color:#a9a59b;border-bottom:none;color:#161616;text-indent:-3px;">Failures</div>
<div class="tab" style="left:498px;top:56px;width:47px;height:11.5px;line-height:9px;background:linear-gradient(#d0ccc3,#bdb9af);border:1px solid #a5a197;border-top-color:#e4e1da;border-left-color:#e4e1da;color:#8a867e;">Warnings</div>
<div class="a" style="left:455px;top:70.6px;width:137px;height:100.5px;background:#fff;box-sizing:border-box;border-top:1px solid #8d897f;border-left:1px solid #8d897f;"></div>
<div class="a" style="left:583px;top:72px;width:8px;height:98px;background:#f4f3f0;"></div>
<div class="a" style="left:585px;top:73px;width:5px;height:5px;border-right:1px solid #55524c;border-bottom:1px solid #55524c;box-sizing:border-box;"></div>
<div class="a" style="left:585px;top:164px;width:5px;height:5px;border-right:1px solid #55524c;border-bottom:1px solid #55524c;box-sizing:border-box;"></div>
<div class="btn" style="left:595px;top:50.5px;width:12px;height:11.5px;line-height:9.5px;font-weight:bold;color:#8b5a3c;font-size:8px;">?</div>
<div class="grp" style="left:110px;top:183px;width:483px;height:34px;"></div>
<div class="t c" style="left:126.0px;width:80px;top:187.5px;">Frequency</div>
<div class="blk" style="left:135.6px;top:199.3px;width:62.1px;height:11px;"></div>
<div class="t c" style="left:218.0px;width:80px;top:187.5px;">Amplitude</div>
<div class="blk" style="left:226.7px;top:199.3px;width:62.1px;height:11px;"></div>
<div class="t c" style="left:325.4px;width:80px;top:187.5px;">Sensitivity</div>
<div class="blk" style="left:317.3px;top:199.3px;width:96.7px;height:11px;"></div>
<div class="t c" style="left:430.0px;width:80px;top:187.5px;">Phase</div>
<div class="blk" style="left:443.0px;top:199.3px;width:55.0px;height:11px;"></div>
<div class="t c" style="left:511.0px;width:80px;top:187.5px;">Deviation</div>
<div class="blk" style="left:526.7px;top:199.3px;width:47.9px;height:11px;"></div>
<div class="a" style="left:139px;top:222.5px;width:458px;height:84.0px;background:#fff;"></div>
<div class="t r" style="left:100px;width:38px;top:217.5px;">40.0-</div>
<div class="h" style="left:139px;top:236.0px;width:456px;"></div>
<div class="t r" style="left:100px;width:38px;top:231.5px;">30.0-</div>
<div class="h" style="left:139px;top:250.0px;width:456px;"></div>
<div class="t r" style="left:100px;width:38px;top:245.5px;">20.0-</div>
<div class="h" style="left:139px;top:264.0px;width:456px;"></div>
<div class="t r" style="left:100px;width:38px;top:259.5px;">10.0-</div>
<div class="h" style="left:139px;top:278.0px;width:456px;"></div>
<div class="t r" style="left:100px;width:38px;top:273.5px;">0.0-</div>
<div class="h" style="left:139px;top:292.0px;width:456px;"></div>
<div class="t r" style="left:100px;width:38px;top:287.5px;">-10.0-</div>
<div class="t r" style="left:100px;width:38px;top:301.5px;">-20.0-</div>
<div class="v" style="left:180.2px;top:222.5px;height:84.0px;background:#ececec;"></div>
<div class="v" style="left:318.6px;top:222.5px;height:84.0px;background:#ececec;"></div>
<div class="v" style="left:457.0px;top:222.5px;height:84.0px;background:#ececec;"></div>
<div class="t c" style="left:70px;width:80px;top:259.5px;transform:rotate(-90deg);">Phase (deg)</div>
<div class="a" style="left:139px;top:317.5px;width:454.6px;height:84.80000000000001px;background:#fff;"></div>
<div class="t r" style="left:100px;width:38px;top:312.5px;">40.0-</div>
<div class="h" style="left:139px;top:331.1px;width:452.6px;"></div>
<div class="t r" style="left:100px;width:38px;top:326.6px;">30.0-</div>
<div class="h" style="left:139px;top:345.3px;width:452.6px;"></div>
<div class="t r" style="left:100px;width:38px;top:340.8px;">20.0-</div>
<div class="h" style="left:139px;top:359.4px;width:452.6px;"></div>
<div class="t r" style="left:100px;width:38px;top:354.9px;">10.0-</div>
<div class="h" style="left:139px;top:373.5px;width:452.6px;"></div>
<div class="t r" style="left:100px;width:38px;top:369.0px;">0.0-</div>
<div class="h" style="left:139px;top:387.7px;width:452.6px;"></div>
<div class="t r" style="left:100px;width:38px;top:383.2px;">-10.0-</div>
<div class="t r" style="left:100px;width:38px;top:397.3px;">-20.0-</div>
<div class="v" style="left:179.9px;top:317.5px;height:84.80000000000001px;background:#ececec;"></div>
<div class="v" style="left:317.3px;top:317.5px;height:84.80000000000001px;background:#ececec;"></div>
<div class="v" style="left:454.7px;top:317.5px;height:84.80000000000001px;background:#ececec;"></div>
<div class="t c" style="left:70px;width:80px;top:354.9px;transform:rotate(-90deg);">Deviation (%)</div>
<div class="a" style="left:548.1px;top:277.7px;width:9px;height:1px;background:#c4707f;"></div>
<div class="a" style="left:552.1px;top:273.7px;width:1px;height:9px;background:#c4707f;"></div>
<div class="a" style="left:549.1px;top:375.7px;width:9px;height:1px;background:#c4707f;"></div>
<div class="a" style="left:553.1px;top:371.7px;width:1px;height:9px;background:#c4707f;"></div>
<div class="t c" style="left:108.8px;width:60px;top:406.8px;">5.0</div>
<div class="t c" style="left:150.5px;width:60px;top:406.8px;">10.0</div>
<div class="t c" style="left:287.7px;width:60px;top:406.8px;">100.0</div>
<div class="t c" style="left:425.6px;width:60px;top:406.8px;">1000.0</div>
<div class="t c" style="left:562.8px;width:60px;top:406.8px;">10000.0</div>
<div class="a" style="left:138.5px;top:402px;width:1px;height:3px;background:#55524c;"></div>
<div class="a" style="left:180.0px;top:402px;width:1px;height:3px;background:#55524c;"></div>
<div class="a" style="left:317.2px;top:402px;width:1px;height:3px;background:#55524c;"></div>
<div class="a" style="left:454.8px;top:402px;width:1px;height:3px;background:#55524c;"></div>
<div class="a" style="left:592.0px;top:402px;width:1px;height:3px;background:#55524c;"></div>
<div class="t r" style="left:109px;width:40px;top:418px;">Start</div>
<div class="t r" style="left:109px;width:40px;top:435.5px;">End</div>
<div class="sunk" style="left:154px;top:416.5px;width:53px;height:12.5px;background:#fff;"></div>
<div class="sunk" style="left:154px;top:434px;width:53px;height:12.5px;background:#fff;"></div>
<div class="sunk" style="left:230px;top:416.4px;width:156.5px;height:31px;background:#fff;"></div>
<div class="btn" style="left:412px;top:414.5px;width:90.5px;height:16px;line-height:14px;">S<u>a</u>ve Calibration</div>
<div class="btn" style="left:412px;top:432px;width:90.5px;height:16px;line-height:14px;"><u>C</u>lose</div>
<div class="btn" style="left:507px;top:432px;width:91px;height:16px;line-height:14px;border-color:#2e2c28;box-shadow:inset 1px 1px 0 #f6f5f1, inset -1px -1px 0 #8d897f, 0 0 0 0.5px #2e2c28;"><u>R</u>un Calibration</div>
<div class="a beige" style="left:617.5px;top:40.5px;width:169px;height:233.0px;box-sizing:border-box;border-left:1px solid #f1efea;border-top:1px solid #f1efea;border-right:1px solid #9a968c;border-bottom:1px solid #9a968c;"></div>
<div class="a" style="left:618.5px;top:41.5px;width:167px;height:8px;background:linear-gradient(#dedac9,#cfcab9);border-bottom:1px solid #a5a197;"></div>
<div class="t c" style="left:642px;top:43.0px;width:120px;font-size:4.6px;line-height:6px;height:6px;color:#444;">Test Sensor Monitor</div>
<div class="a beige" style="left:617.5px;top:283px;width:169px;height:169px;box-sizing:border-box;border-left:1px solid #f1efea;border-top:1px solid #f1efea;border-right:1px solid #9a968c;border-bottom:1px solid #9a968c;"></div>
<div class="a" style="left:618.5px;top:284px;width:167px;height:8px;background:linear-gradient(#dedac9,#cfcab9);border-bottom:1px solid #a5a197;"></div>
<div class="t c" style="left:642px;top:285.5px;width:120px;font-size:4.6px;line-height:6px;height:6px;color:#444;">Standard Sensor Monitor</div>
<div class="t" style="left:630.8px;top:51.3px;font-size:7.8px;transform-origin:0 50%;transform:scaleX(0.970);">Manufacturer</div>
<div class="t" style="left:716.0px;top:51.3px;font-size:7.8px;transform-origin:0 50%;transform:scaleX(1.001);">Dytran</div>
<div class="t" style="left:628.7px;top:62.4px;font-size:7.8px;transform-origin:0 50%;transform:scaleX(0.950);">Model Number</div>
<div class="t" style="left:715.0px;top:62.4px;font-size:7.8px;transform-origin:0 50%;transform:scaleX(0.915);">3234A1</div>
<div class="t" style="left:630.4px;top:73.9px;font-size:7.8px;transform-origin:0 50%;transform:scaleX(0.965);">Serial Number</div>
<div class="t" style="left:717.2px;top:73.9px;font-size:7.8px;transform-origin:0 50%;transform:scaleX(0.936);">10415</div>
<div class="t" style="left:623.5px;top:85.0px;font-size:7.8px;transform-origin:0 50%;transform:scaleX(0.994);">Operation Type</div>
<div class="t" style="left:706.6px;top:85.0px;font-size:7.8px;transform-origin:0 50%;transform:scaleX(0.988);">Acceleration</div>
<div class="t" style="left:641.3px;top:95.9px;font-size:7.8px;transform-origin:0 50%;transform:scaleX(0.955);">ID Number</div>
<div class="t" style="left:643.8px;top:107.4px;font-size:7.8px;transform-origin:0 50%;transform:scaleX(0.946);">Customer</div>
<div class="a" style="left:622px;top:131.0px;width:162px;height:108.5px;box-sizing:border-box;border:1px solid #b9b5ab;border-top-color:#efede8;border-left-color:#efede8;"></div>
<div class="tab" style="left:624px;top:118.5px;width:27px;height:13.5px;line-height:10.5px;background:#d4d0c8;border:1px solid #dfdcd5;border-right-color:#b5b1a7;border-bottom:none;color:#161616;">Time</div>
<div class="tab" style="left:654px;top:119.5px;width:28px;height:11.5px;line-height:9.5px;background:linear-gradient(#d0ccc3,#bdb9af);border:1px solid #a5a197;border-top-color:#e4e1da;border-left-color:#e4e1da;color:#8a867e;">FFT</div>
<div class="a" style="left:642.5px;top:137px;width:133.5px;height:89px;background:#fff;"></div>
<div class="t r" style="left:600.5px;width:40px;top:132.0px;">100-</div>
<div class="h" style="left:642.5px;top:154.3px;width:133.5px;"></div>
<div class="t r" style="left:600.5px;width:40px;top:149.8px;">80-</div>
<div class="h" style="left:642.5px;top:172.1px;width:133.5px;"></div>
<div class="t r" style="left:600.5px;width:40px;top:167.6px;">60-</div>
<div class="h" style="left:642.5px;top:189.9px;width:133.5px;"></div>
<div class="t r" style="left:600.5px;width:40px;top:185.4px;">40-</div>
<div class="h" style="left:642.5px;top:207.7px;width:133.5px;"></div>
<div class="t r" style="left:600.5px;width:40px;top:203.2px;">20-</div>
<div class="t r" style="left:600.5px;width:40px;top:221.0px;">0-</div>
<div class="t c" style="left:622.5px;width:40px;top:230.0px;">0</div>
<div class="a" style="left:642.0px;top:226px;width:1px;height:2.5px;background:#55524c;"></div>
<div class="v" style="left:668.5px;top:137px;height:89px;"></div>
<div class="t c" style="left:649.0px;width:40px;top:230.0px;">20</div>
<div class="a" style="left:668.5px;top:226px;width:1px;height:2.5px;background:#55524c;"></div>
<div class="v" style="left:695.0px;top:137px;height:89px;"></div>
<div class="t c" style="left:675.5px;width:40px;top:230.0px;">40</div>
<div class="a" style="left:695.0px;top:226px;width:1px;height:2.5px;background:#55524c;"></div>
<div class="v" style="left:721.5px;top:137px;height:89px;"></div>
<div class="t c" style="left:702.0px;width:40px;top:230.0px;">60</div>
<div class="a" style="left:721.5px;top:226px;width:1px;height:2.5px;background:#55524c;"></div>
<div class="v" style="left:748.0px;top:137px;height:89px;"></div>
<div class="t c" style="left:728.5px;width:40px;top:230.0px;">80</div>
<div class="a" style="left:748.0px;top:226px;width:1px;height:2.5px;background:#55524c;"></div>
<div class="t c" style="left:755.0px;width:40px;top:230.0px;">100</div>
<div class="a" style="left:774.5px;top:226px;width:1px;height:2.5px;background:#55524c;"></div>
<div class="a" style="left:620px;top:241px;width:165px;height:1px;background:#a5a197;border-bottom:1px solid #efede8;"></div>
<div class="t r" style="left:626px;width:100px;top:245.3px;">Harmonic Distortion</div>
<div class="sunk" style="left:731px;top:242.8px;width:42px;height:13px;font-size:7.8px;line-height:11px;padding-left:1px;color:#161616;">0.0000</div>
<div class="t r" style="left:628px;width:100px;top:259.6px;">Signal / Noise (dB)</div>
<div class="sunk" style="left:731px;top:257.1px;width:42px;height:13px;font-size:7.8px;line-height:11px;padding-left:1px;color:#161616;">0.0000</div>
<div class="a" style="left:622px;top:307.0px;width:162px;height:109.5px;box-sizing:border-box;border:1px solid #b9b5ab;border-top-color:#efede8;border-left-color:#efede8;"></div>
<div class="tab" style="left:624px;top:294.5px;width:27px;height:13.5px;line-height:10.5px;background:#d4d0c8;border:1px solid #dfdcd5;border-right-color:#b5b1a7;border-bottom:none;color:#161616;">Time</div>
<div class="tab" style="left:654px;top:295.5px;width:28px;height:11.5px;line-height:9.5px;background:linear-gradient(#d0ccc3,#bdb9af);border:1px solid #a5a197;border-top-color:#e4e1da;border-left-color:#e4e1da;color:#8a867e;">FFT</div>
<div class="a" style="left:649px;top:314px;width:127px;height:90px;background:#fff;"></div>
<div class="t r" style="left:607px;width:40px;top:309.0px;">100.0-</div>
<div class="h" style="left:649px;top:331.5px;width:127px;"></div>
<div class="t r" style="left:607px;width:40px;top:327.0px;">80.0-</div>
<div class="h" style="left:649px;top:349.5px;width:127px;"></div>
<div class="t r" style="left:607px;width:40px;top:345.0px;">60.0-</div>
<div class="h" style="left:649px;top:367.5px;width:127px;"></div>
<div class="t r" style="left:607px;width:40px;top:363.0px;">40.0-</div>
<div class="h" style="left:649px;top:385.5px;width:127px;"></div>
<div class="t r" style="left:607px;width:40px;top:381.0px;">20.0-</div>
<div class="t r" style="left:607px;width:40px;top:399.0px;">0.1-</div>
<div class="t c" style="left:629.0px;width:40px;top:408.0px;">0</div>
<div class="a" style="left:648.5px;top:404px;width:1px;height:2.5px;background:#55524c;"></div>
<div class="v" style="left:673.7px;top:314px;height:90px;"></div>
<div class="t c" style="left:654.2px;width:40px;top:408.0px;">20</div>
<div class="a" style="left:673.7px;top:404px;width:1px;height:2.5px;background:#55524c;"></div>
<div class="v" style="left:698.9px;top:314px;height:90px;"></div>
<div class="t c" style="left:679.4px;width:40px;top:408.0px;">40</div>
<div class="a" style="left:698.9px;top:404px;width:1px;height:2.5px;background:#55524c;"></div>
<div class="v" style="left:724.1px;top:314px;height:90px;"></div>
<div class="t c" style="left:704.6px;width:40px;top:408.0px;">60</div>
<div class="a" style="left:724.1px;top:404px;width:1px;height:2.5px;background:#55524c;"></div>
<div class="v" style="left:749.3px;top:314px;height:90px;"></div>
<div class="t c" style="left:729.8px;width:40px;top:408.0px;">80</div>
<div class="a" style="left:749.3px;top:404px;width:1px;height:2.5px;background:#55524c;"></div>
<div class="t c" style="left:755.0px;width:40px;top:408.0px;">100</div>
<div class="a" style="left:774.5px;top:404px;width:1px;height:2.5px;background:#55524c;"></div>
<div class="a" style="left:620px;top:418px;width:165px;height:1px;background:#a5a197;border-bottom:1px solid #efede8;"></div>
<div class="t r" style="left:626px;width:100px;top:423.0px;">Harmonic Distortion</div>
<div class="sunk" style="left:731px;top:420.5px;width:42px;height:13px;font-size:7.8px;line-height:11px;padding-left:1px;color:#161616;">0.0000</div>
<div class="t r" style="left:628px;width:100px;top:436.6px;">Signal / Noise (dB)</div>
<div class="sunk" style="left:731px;top:434.1px;width:42px;height:13px;font-size:7.8px;line-height:11px;padding-left:1px;color:#161616;">0.0000</div>
<svg class="a" style="left:6px;top:4px" width="24" height="22" viewBox="0 0 24 22">
<defs><linearGradient x1="0" y1="0" x2="1" y2="1"><stop offset="0" stop-color="#0f2a96"/><stop offset="1" stop-color="#1f4fc4"/></linearGradient></defs>
<polygon points="3,2 21,0.5 22,13 4,14.5" fill="#dfe6f3"/>
<polygon points="5,3.5 19.5,2.3 20.3,11.6 5.8,12.8" fill="url(#scr)"/>
<polygon points="10,14.5 16,14 17,17 10,17.5" fill="#c2cad9"/>
<ellipse cx="13.5" cy="18.5" rx="7.5" ry="2.2" fill="#e6ebf5"/>
<polygon points="1,9 5,8.6 5.5,16 1.5,16.3" fill="#b9c3d6"/>
</svg>
<div class="lbl" style="left:-4.5px;top:26.8px;width:44px;">Computer</div>
<svg class="a" style="left:6px;top:51px" width="24" height="24" viewBox="0 0 24 24">
<circle cx="6" cy="4" r="1.5" fill="#2d67c9"/><circle cx="13" cy="16" r="1.6" fill="#2d67c9"/><circle cx="19" cy="12" r="1.4" fill="#2d67c9"/><circle cx="19" cy="20" r="1.4" fill="#2d67c9"/>
<path d="M1.5,18.5 C2.5,9 9,3.5 17,3.5 L16.5,0.5 L23.5,4.5 L18,10 L17.5,7.8 C11.5,8 7.5,11.5 6.5,18.5 Z" fill="#f0bb1c"/>
<rect x="0.5" y="15.5" width="6" height="6" fill="#f4f6fb"/><path d="M2,20 L5,17 M5,17 L3,17 M5,17 L5,19" stroke="#1b3fae" stroke-width="0.9" fill="none"/>
</svg>
<div class="lbl" style="left:-5.0px;top:74.8px;width:44px;">NI MAX</div>
<svg class="a" style="left:7px;top:99px" width="21" height="22" viewBox="0 0 21 22">
<rect x="0.5" y="0.5" width="20" height="20" fill="#e9ebe6" stroke="#9aa6b8" stroke-width="0.8"/>
<rect x="1.5" y="1.5" width="18" height="3" fill="#6f8fc6"/>
<rect x="2" y="6" width="17" height="13" fill="#dfe3cf"/>
<circle cx="9" cy="12" r="3.5" fill="#9db37a"/><circle cx="13.5" cy="10" r="2.5" fill="#e6c96a"/><rect x="4" y="14" width="12" height="3" fill="#8aa2c9"/>
<rect x="0.5" y="15.5" width="6" height="6" fill="#f4f6fb"/><path d="M2,20 L5,17 M5,17 L3,17 M5,17 L5,19" stroke="#1b3fae" stroke-width="0.9" fill="none"/>
</svg>
<div class="lbl" style="left:-4.5px;top:123.1px;width:44px;">ndecad32 -</div>
<div class="lbl" style="left:-4.5px;top:129.8px;width:44px;">Shortcut</div>
<svg class="a" style="left:10px;top:149px" width="16" height="20" viewBox="0 0 16 20">
<path d="M0.5,0.5 L11,0.5 L15.5,5 L15.5,19.5 L0.5,19.5 Z" fill="#f3f4f6" stroke="#c9ced8" stroke-width="0.6"/>
<path d="M11,0.5 L11,5 L15.5,5 Z" fill="#d2d7e1"/>
</svg>
<div class="lbl" style="left:-4.5px;top:170.8px;width:44px;">a01021412</div>
<div class="lbl" style="left:-4.5px;top:177.6px;width:44px;">Office Pro 2...</div>
<svg class="a" style="left:6px;top:197px" width="23" height="19" viewBox="0 0 23 19">
<rect x="1" y="0.5" width="21" height="14" rx="1" fill="#bfe0f2" stroke="#6da7d4" stroke-width="0.8"/>
<rect x="3" y="2.5" width="7" height="4.5" fill="#3f8fd0"/><rect x="12" y="2.5" width="8" height="4.5" fill="#69b5e4"/>
<rect x="3" y="8.5" width="7" height="4" fill="#8cc9ea"/><rect x="12" y="8.5" width="8" height="4" fill="#4f9ed6"/>
<ellipse cx="11" cy="15.5" rx="4.2" ry="3" fill="#e8edf4"/><path d="M8,15 A3,3 0 0 1 14,15" fill="#4a8fd2"/>
</svg>
<div class="lbl" style="left:-4.5px;top:218.8px;width:44px;">Control Panel</div>
<svg class="a" style="left:6px;top:241px" width="22" height="22" viewBox="0 0 22 22">
<defs><radialGradient cx="0.4" cy="0.35" r="0.7"><stop offset="0" stop-color="#9be07a"/><stop offset="0.5" stop-color="#3fa0c8"/><stop offset="1" stop-color="#1a56b0"/></radialGradient></defs>
<circle cx="8.5" cy="8.5" r="7.8" fill="url(#gl)"/>
<path d="M3,6 C5,3 8,3 9,5 C8,8 5,9 3,6 Z" fill="#7fd06a" opacity="0.9"/>
<polygon points="9,7 20,6 21,15 10,16" fill="#dfe6f3"/><polygon points="10.5,8.3 19,7.5 19.7,13.8 11.2,14.6" fill="#1b3fae"/>
<ellipse cx="15.5" cy="18.5" rx="5" ry="1.6" fill="#e6ebf5"/><rect x="14" y="15.5" width="3" height="3" fill="#c2cad9"/>
</svg>
<div class="lbl" style="left:-5.0px;top:265.8px;width:44px;">Network</div>
<svg class="a" style="left:7px;top:291px" width="20" height="21" viewBox="0 0 20 21">
<path d="M4.5,0.5 L15,0.5 L19.5,5 L19.5,20.5 L4.5,20.5 Z" fill="#f4f5f4" stroke="#c5cbd6" stroke-width="0.6"/>
<path d="M15,0.5 L15,5 L19.5,5 Z" fill="#d2d7e1"/>
<rect x="7" y="6.5" width="10.5" height="1.6" fill="#e9d9a6"/><rect x="7" y="9.5" width="10.5" height="1.6" fill="#e9d9a6"/><rect x="7" y="12.5" width="10.5" height="1.6" fill="#e9d9a6"/><rect x="7" y="15.5" width="10.5" height="1.6" fill="#e9d9a6"/>
<rect x="0.5" y="7.5" width="9" height="9" fill="#2b5fb8"/>
<text x="5" y="14.6" font-family="Liberation Sans" font-weight="bold" font-size="7" fill="#fff" text-anchor="middle">W</text>
</svg>
<div class="lbl" style="left:-5.0px;top:314.3px;width:44px;">Вопросы</div>
<svg class="a" style="left:41.5px;top:291px" width="20" height="21" viewBox="0 0 20 21">
<path d="M4.5,0.5 L15,0.5 L19.5,5 L19.5,20.5 L4.5,20.5 Z" fill="#f4f5f4" stroke="#c5cbd6" stroke-width="0.6"/>
<path d="M15,0.5 L15,5 L19.5,5 Z" fill="#d2d7e1"/>
<rect x="7" y="6.5" width="10.5" height="1.6" fill="#bfe0b0"/><rect x="7" y="9.5" width="10.5" height="1.6" fill="#bfe0b0"/><rect x="7" y="12.5" width="10.5" height="1.6" fill="#bfe0b0"/><rect x="7" y="15.5" width="10.5" height="1.6" fill="#bfe0b0"/>
<rect x="0.5" y="7.5" width="9" height="9" fill="#2e8b4f"/>
<text x="5" y="14.6" font-family="Liberation Sans" font-weight="bold" font-size="7" fill="#fff" text-anchor="middle">X</text>
</svg>
<div class="lbl" style="left:30.0px;top:314.3px;width:44px;">201A12</div>
<svg class="a" style="left:8px;top:385px" width="17" height="23" viewBox="0 0 17 23">
<path d="M1,3 L6,1 L7,3 L15,2 L16,20 L2,22 Z" fill="#e9c95c"/>
<path d="M3,5 L8,3.5 L8.5,20 L3.5,21.5 Z" fill="#f7f2e4"/>
<path d="M8,3 L15.5,1.5 L16.2,19.5 L9,21.5 Z" fill="#f4dc85"/>
<path d="M9.5,5 L9.5,20" stroke="#d8b64a" stroke-width="0.8"/>
</svg>
<div class="lbl" style="left:-4.5px;top:410.1px;width:44px;">Протоколы</div>
<svg class="a" style="left:8px;top:434px" width="20" height="21" viewBox="0 0 20 21">
<path d="M4.5,0.5 L15,0.5 L19.5,5 L19.5,20.5 L4.5,20.5 Z" fill="#f4f5f4" stroke="#c5cbd6" stroke-width="0.6"/>
<path d="M15,0.5 L15,5 L19.5,5 Z" fill="#d2d7e1"/>
<rect x="7" y="6.5" width="10.5" height="1.6" fill="#bfe0b0"/><rect x="7" y="9.5" width="10.5" height="1.6" fill="#bfe0b0"/><rect x="7" y="12.5" width="10.5" height="1.6" fill="#bfe0b0"/><rect x="7" y="15.5" width="10.5" height="1.6" fill="#bfe0b0"/>
<rect x="0.5" y="7.5" width="9" height="9" fill="#2e8b4f"/>
<text x="5" y="14.6" font-family="Liberation Sans" font-weight="bold" font-size="7" fill="#fff" text-anchor="middle">X</text>
</svg>
<div class="lbl" style="left:-4.5px;top:457.5px;width:44px;">New</div>
<div class="lbl" style="left:-4.5px;top:464.6px;width:44px;">Microsoft...</div>
<svg class="a" style="left:844px;top:8px" width="24" height="18" viewBox="0 0 24 18">
<defs><linearGradient x1="1" y1="0" x2="0.2" y2="1"><stop offset="0" stop-color="#9be4fb"/><stop offset="0.5" stop-color="#3fa8e8"/><stop offset="1" stop-color="#1f6fc8"/></linearGradient></defs>
<polygon points="21.4,1.3 5.3,8.2 11,10 22.6,14.5" fill="url(#xps)"/>
<path d="M11,10 Q15,8.5 19.5,13.3 L11.5,12.5 Z" fill="#164a9e" opacity="0.8"/>
<rect x="0.9" y="10.1" width="7.6" height="6.6" fill="#eef2fa"/><path d="M2.6,15.2 L6.2,11.8 M6.2,11.8 L4,11.8 M6.2,11.8 L6.2,14" stroke="#1b3fae" stroke-width="1" fill="none"/>
</svg>
<div class="lbl" style="left:834.0px;top:27.1px;width:44px;letter-spacing:-0.45px;">XPS Viewer</div>
<svg class="a" style="left:848px;top:434px" width="20" height="30" viewBox="0 0 20 30">
<path d="M2,3 L18,2 L16,27 L5,28 Z" fill="#c8d6e8" opacity="0.55"/>
<path d="M4,4 L16,3 L15,12 L5,13 Z" fill="#eef3fa" opacity="0.75"/>
<path d="M6,10 L13,8 L11,15 L14,21 L7,23 Z" fill="#7fa6d2" opacity="0.6"/>
<path d="M9,12 L17,10 L16.5,22 L10,24 Z" fill="#f4f7fb" opacity="0.6"/>
</svg>
<div class="lbl" style="left:834px;top:459px;width:44px;color:#8a6a3a;font-size:4.5px;">Recycle Bin</div>
<div class="a" style="left:-8px;top:478.5px;width:899px;height:26px;background:linear-gradient(#2a4d8a,#1f4280 6.5px,#193870 18.5px,#193870);border-top:1px solid #3a5a94;box-sizing:border-box;"></div>
<div class="a" style="left:679px;top:472.5px;font:bold 15.5px 'Liberation Sans',sans-serif;color:#6f8fc8;opacity:0.45;letter-spacing:2.2px;white-space:nowrap;line-height:16px;text-shadow:none;filter:blur(1px);clip-path:inset(6.5px 0 0 0);">A PCB GROUP CO.</div>
<div class="a" style="left:56px;top:479.5px;width:26.5px;height:17.5px;background:linear-gradient(#8fa6cb,#5c7bb0 50%,#4a6aa2);border:1px solid #9fb4d6;box-sizing:border-box;border-radius:1.5px;"></div>
<div class="a" style="left:85px;top:479.5px;width:26px;height:17.5px;background:linear-gradient(#8597b8,#55699a 50%,#445a8e);border:1px solid #8ea2c6;box-sizing:border-box;border-radius:1.5px;"></div>
<div class="a" style="left:113px;top:479.5px;width:27px;height:17.5px;background:linear-gradient(#b7c6de,#8ba3cb 50%,#7d97c2);border:1px solid #c5d2e8;box-sizing:border-box;border-radius:1.5px;"></div>
<svg class="a" style="left:2px;top:478px" width="20" height="19" viewBox="0 0 20 19">
<defs><radialGradient cx="0.5" cy="0.4" r="0.6"><stop offset="0" stop-color="#a6c8ee"/><stop offset="0.6" stop-color="#3f74b8"/><stop offset="1" stop-color="#1f4480"/></radialGradient></defs>
<circle cx="10" cy="10" r="8.8" fill="url(#orb)" stroke="#8fb0dc" stroke-width="0.6"/>
<path d="M5.5,6.5 Q7.5,5.3 9.3,6.3 L9.3,9.6 Q7.5,8.8 5.5,9.8 Z" fill="#e8553a"/>
<path d="M10.3,6.4 Q12.3,7.4 14.3,6.4 L14.3,9.6 Q12.3,10.5 10.3,9.6 Z" fill="#8bc34a"/>
<path d="M5.5,10.8 Q7.5,9.8 9.3,10.6 L9.3,13.8 Q7.5,13 5.5,14 Z" fill="#3b8ee0"/>
<path d="M10.3,10.6 Q12.3,11.5 14.3,10.6 L14.3,13.7 Q12.3,14.7 10.3,13.8 Z" fill="#f5c63a"/>
</svg>
<svg class="a" style="left:32px;top:480px" width="17" height="16" viewBox="0 0 17 16">
<circle cx="8.5" cy="8.5" r="5.6" fill="none" stroke="#5cc0f2" stroke-width="3"/>
<rect x="4" y="7.3" width="10" height="2" fill="#5cc0f2"/>
<rect x="9" y="9.3" width="6.5" height="2.4" fill="#17346c"/>
<path d="M2,12 C0,6 8,-1 15.5,2.5 C10,1.5 4,6 3.5,12 Z" fill="#f2c84a"/>
</svg>
<svg class="a" style="left:61px;top:482px" width="17" height="14" viewBox="0 0 17 14">
<path d="M1,2 L6,1 L7,2.5 L15.5,2 L16,12.5 L1.5,13 Z" fill="#f0d36a"/>
<path d="M2,5 L15,4.4 L15.5,12 L2.3,12.5 Z" fill="#f8eaa4"/>
<rect x="3" y="7" width="11" height="2.5" fill="#8fc0e8" opacity="0.8"/>
</svg>
<svg class="a" style="left:89px;top:481px" width="18" height="15" viewBox="0 0 18 15">
<ellipse cx="8" cy="9" rx="6.5" ry="5" fill="#d9dde6"/>
<path d="M5,11 C7,6 11,3 15,1.5 L16,3 C12,5 9,8 7.5,12 Z" fill="#e9c45a"/>
<circle cx="7" cy="9.5" r="2" fill="#7f8aa3"/>
</svg>
<svg class="a" style="left:118px;top:480.5px" width="17" height="16" viewBox="0 0 17 16">
<rect x="1" y="0.5" width="15" height="15" fill="#2a63ae"/>
<polygon points="8.5,1 15.5,8 8.5,15 1.5,8" fill="#2ccaf0"/>
<polygon points="8.5,5.2 11.3,8 8.5,10.8 5.7,8" fill="#1479c8"/>
<rect x="3.3" y="1" width="1.2" height="14" fill="#143a78"/><rect x="12.5" y="1" width="1.2" height="14" fill="#143a78"/>
</svg>
<div class="t" style="left:787px;top:482.5px;font-size:5.2px;color:#b9c6de;text-shadow:none;">EN</div>
<div class="a" style="left:803px;top:488.5px;width:0;height:0;border-left:2px solid transparent;border-right:2px solid transparent;border-bottom:2.5px solid #dfe6f3;"></div>
<svg class="a" style="left:811px;top:483.5px;opacity:0.8" width="8" height="8" viewBox="0 0 9 9"><polygon points="0.5,3 3,3 6,0.5 6,8.5 3,6 0.5,6" fill="#e9eef6"/><path d="M7,2.5 Q8.5,4.5 7,6.5" stroke="#e9eef6" stroke-width="0.7" fill="none"/></svg>
<svg class="a" style="left:823px;top:483.5px;opacity:0.75" width="8" height="8" viewBox="0 0 9 9"><rect x="1" y="0.5" width="7" height="7" fill="#f3f0f0"/><path d="M1,0.5 L8,7.5 M8,0.5 L1,7.5" stroke="#d33" stroke-width="1.6"/><circle cx="4.5" cy="4" r="1.4" fill="#fff"/></svg>
<svg class="a" style="left:834.5px;top:483.5px;opacity:0.8" width="8" height="8" viewBox="0 0 9 9"><rect x="1" y="2" width="7" height="6" fill="#d8c84a"/><rect x="2" y="0.8" width="3" height="2" fill="#efe6a0"/><rect x="2.5" y="4" width="4" height="2.5" fill="#6f8a3a"/></svg>
<div class="t c" style="left:840px;width:40px;top:479.5px;font-size:5.4px;line-height:8px;height:8px;color:#b9c6de;text-shadow:none;">11:21</div>
<div class="t c" style="left:840px;width:40px;top:488px;font-size:5.4px;line-height:8px;height:8px;color:#b9c6de;text-shadow:none;">02/08/16</div>
<div class="a" style="left:877px;top:479.5px;width:6px;height:17.5px;background:linear-gradient(#5c78aa,#2c4a84);border-left:1px solid #8aa2cc;box-sizing:border-box;"></div>
</div></div>
</body>
</html>
